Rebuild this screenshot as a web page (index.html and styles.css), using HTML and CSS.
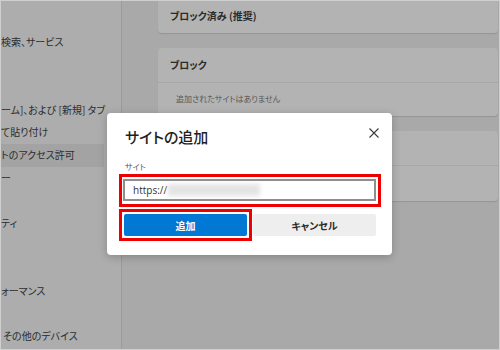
FILE: index.html
```html
<!DOCTYPE html>
<html lang="ja">
<head>
<meta charset="utf-8">
<title>サイトの追加</title>
<link rel="stylesheet" href="styles.css">
</head>
<body>
<div class="frame">
  <nav class="sidebar">
    <div class="nav-item">検索、サービス</div>
    <div class="nav-item"></div>
    <div class="nav-item"></div>
    <div class="nav-item">ーム]、および [新規] タブ</div>
    <div class="nav-item">て貼り付け</div>
    <div class="nav-item selected">トのアクセス許可</div>
    <div class="nav-item">ー</div>
    <div class="nav-item"></div>
    <div class="nav-item">ティ</div>
    <div class="nav-item"></div>
    <div class="nav-item"></div>
    <div class="nav-item">ォーマンス</div>
    <div class="nav-item"></div>
    <div class="nav-item nav-indent">その他のデバイス</div>
  </nav>
  <main class="main">
    <section class="card card-top">
      <div class="card-row card-head">ブロック済み (推奨)</div>
    </section>
    <section class="card">
      <div class="card-row card-head">ブロック</div>
      <div class="card-row card-empty">追加されたサイトはありません</div>
    </section>
    <section class="card">
      <div class="card-row"></div>
      <div class="card-row card-tall"></div>
    </section>
  </main>

  <div class="dialog">
    <div class="dialog-head">
      <h2 class="dialog-title">サイトの追加</h2>
      <button class="close" aria-label="閉じる">
        <svg width="10" height="10" viewBox="0 0 10 10"><path d="M0.5 0.5 L9.5 9.5 M9.5 0.5 L0.5 9.5" stroke="#3a3a3a" stroke-width="1.1" fill="none"/></svg>
      </button>
    </div>
    <div class="field-label">サイト</div>
    <div class="mark mark-input">
      <div class="input"><span class="url">https://</span><span class="blur"></span></div>
    </div>
    <div class="actions">
      <div class="mark mark-btn"><button class="btn btn-primary">追加</button></div>
      <button class="btn btn-secondary">キャンセル</button>
    </div>
  </div>
</div>
</body>
</html>
```
FILE: styles.css
```css
* { box-sizing: border-box; }
html, body { margin: 0; padding: 0; }
body {
  width: 500px;
  height: 350px;
  overflow: hidden;
  font-family: "Noto Sans CJK JP", "Noto Sans", sans-serif;
  font-feature-settings: "palt";
}
.frame {
  position: relative;
  width: 500px;
  height: 350px;
  border: 1px solid #cfcfcf;
  background: #a9a9a9;
  display: flex;
  overflow: hidden;
}
.sidebar {
  width: 121px;
  flex: none;
  background: #adadad;
  border-right: 1px solid #9b9b9b;
  padding-top: 30px;
  display: flex;
  flex-direction: column;
  overflow: hidden;
}
.nav-item {
  height: 22.6px;
  line-height: 22.6px;
  font-size: 10px;
  color: #2c2c2c;
  white-space: nowrap;
  margin-right: 17px;
}
.nav-indent { padding-left: 2px; }
.selected { background: #a3a3a3; }

.main {
  flex: 1;
  padding: 0 1px 0 36px;
  display: flex;
  flex-direction: column;
  gap: 15px;
}
.card {
  background: #b3b3b3;
  border-radius: 4px;
  box-shadow: 0 1px 1px rgba(0, 0, 0, 0.12);
}
.card-top { border-radius: 0 0 4px 4px; }
.card-row {
  height: 34px;
  display: flex;
  align-items: center;
  padding: 0 0 2px 12px;
  font-size: 10px;
  color: #2a2a2a;
}
.card-row + .card-row { border-top: 1px solid #a7a7a7; }
.card-top .card-row { height: 32px; padding-bottom: 3px; }
.card-head { font-weight: 700; }
.card-empty { padding-left: 18px; font-size: 8px; color: #555; }
.card-tall { height: 36px; }

.dialog {
  position: absolute;
  left: 106px;
  top: 112px;
  width: 285px;
  height: 142px;
  background: #fff;
  border-radius: 4px;
  box-shadow: 0 2px 8px rgba(0, 0, 0, 0.22);
  padding: 14px 11px 12px 12px;
  display: flex;
  flex-direction: column;
}
.dialog-head {
  display: flex;
  justify-content: space-between;
  align-items: flex-start;
}
.dialog-title {
  margin: 0 0 0 6px;
  font-size: 15px;
  line-height: 20px;
  font-weight: 500;
  color: #1f1f1f;
}
.close {
  margin: -3px -2px 0 0;
  width: 18px;
  height: 18px;
  padding: 0;
  border: 0;
  background: transparent;
  display: flex;
  align-items: center;
  justify-content: center;
}
.field-label {
  margin: 14px 0 0 6px;
  font-size: 8px;
  line-height: 12px;
  color: #555;
}
.mark {
  border: 3px solid #ee0000;
}
.mark-input {
  margin-top: 1px;
  padding: 2px 2px 3px 1px;
  width: 262px;
}
.input {
  height: 22px;
  border: 2px solid #8e8e8e;
  display: flex;
  align-items: center;
  padding-left: 8px;
}
.url {
  font-family: "Open Sans", "Noto Sans", sans-serif;
  font-size: 10px;
  color: #333;
}
.blur {
  display: block;
  width: 92px;
  height: 12px;
  margin-left: 1px;
  background: #e4e4e4;
  filter: blur(2px);
}
.actions {
  margin-top: 2px;
  display: flex;
  align-items: center;
  gap: 1px;
}
.mark-btn {
  padding: 2px;
  width: 133px;
}
.btn {
  height: 22px;
  border: 0;
  border-radius: 2px;
  font-family: "Noto Sans CJK JP", sans-serif;
  font-feature-settings: "palt";
  font-size: 10px;
  font-weight: 700;
  padding: 0;
}
.btn-primary {
  width: 123px;
  background: #0078d4;
  color: #fff;
  display: block;
}
.btn-secondary {
  width: 123px;
  background: #eeeeee;
  color: #2a2a2a;
}
```
